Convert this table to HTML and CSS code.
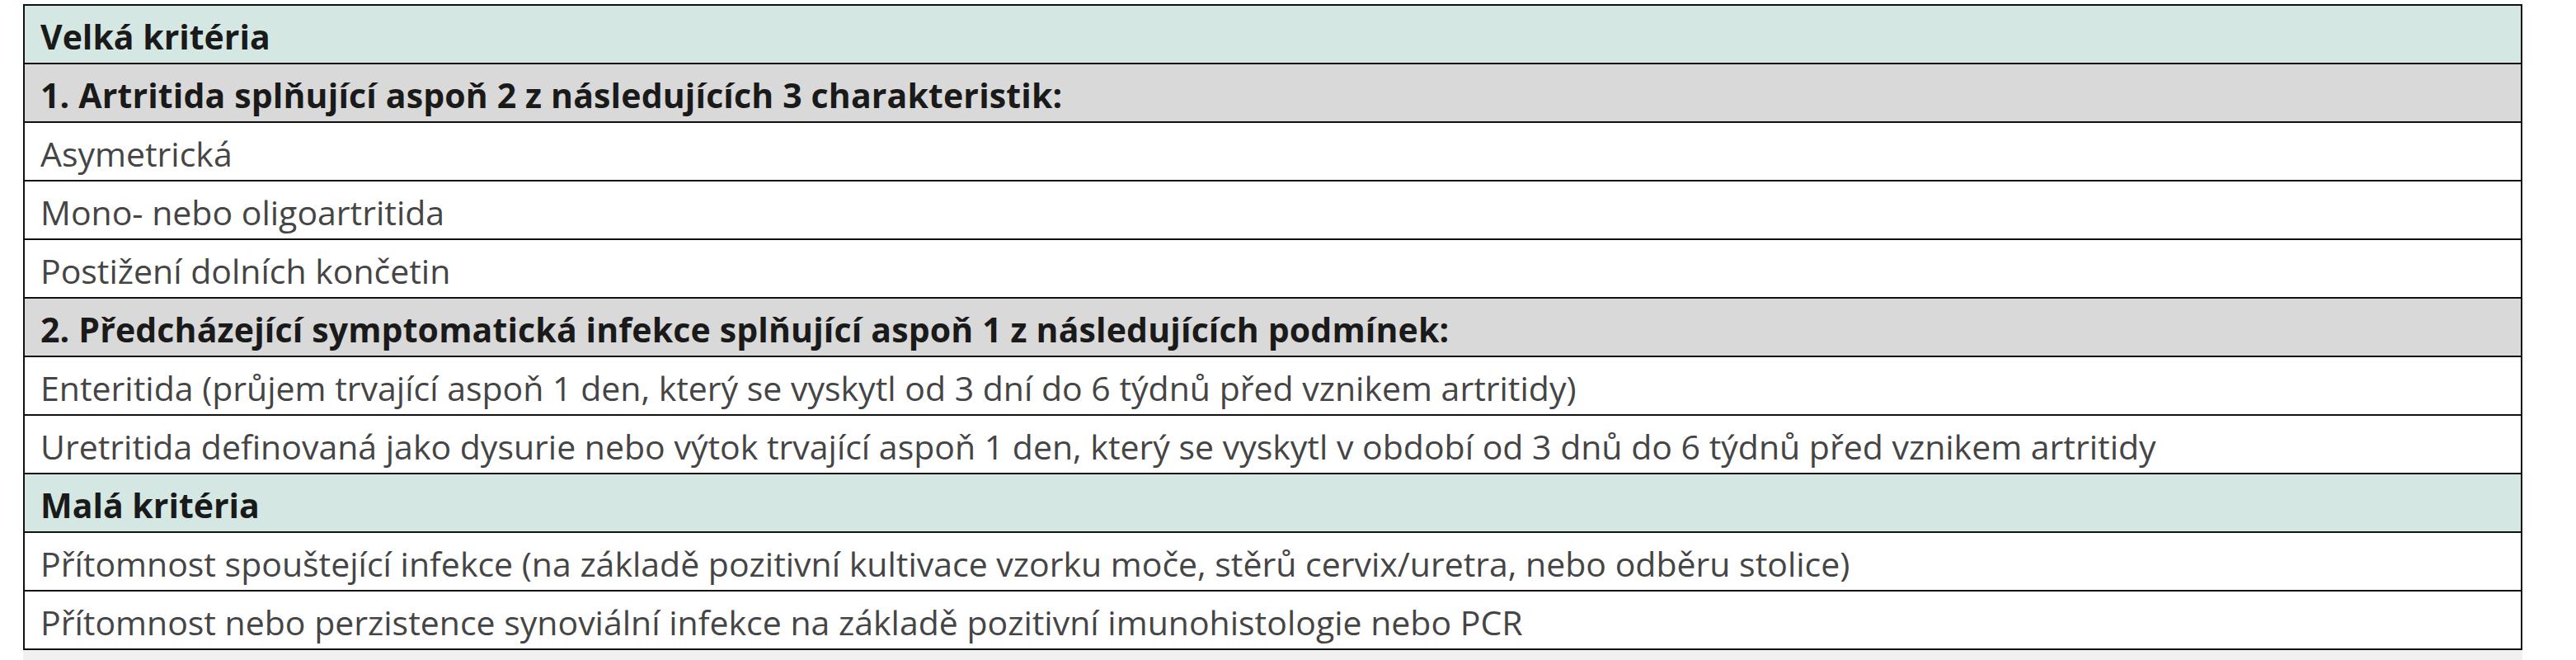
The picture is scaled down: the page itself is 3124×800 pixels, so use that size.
FILE: index.html
```html
<!DOCTYPE html>
<html lang="cs">
<head>
<meta charset="utf-8">
<title>Kritéria reaktivní artritidy</title>
<link rel="stylesheet" href="styles.css">
</head>
<body>
<div class="sheet">
  <table class="criteria">
    <tbody>
      <tr class="section"><td>Velká kritéria</td></tr>
      <tr class="group"><td>1. Artritida splňující aspoň 2 z následujících 3 charakteristik:</td></tr>
      <tr class="item"><td>Asymetrická</td></tr>
      <tr class="item"><td>Mono- nebo oligoartritida</td></tr>
      <tr class="item"><td>Postižení dolních končetin</td></tr>
      <tr class="group"><td>2. Předcházející symptomatická infekce splňující aspoň 1 z následujících podmínek:</td></tr>
      <tr class="item"><td>Enteritida (průjem trvající aspoň 1 den, který se vyskytl od 3 dní do 6 týdnů před vznikem artritidy)</td></tr>
      <tr class="item"><td>Uretritida definovaná jako dysurie nebo výtok trvající aspoň 1 den, který se vyskytl v období od 3 dnů do 6 týdnů před vznikem artritidy</td></tr>
      <tr class="section"><td>Malá kritéria</td></tr>
      <tr class="item"><td>Přítomnost spouštející infekce (na základě pozitivní kultivace vzorku moče, stěrů cervix/uretra, nebo odběru stolice)</td></tr>
      <tr class="item"><td>Přítomnost nebo perzistence synoviální infekce na základě pozitivní imunohistologie nebo PCR</td></tr>
    </tbody>
  </table>
  <div class="foot"></div>
</div>
</body>
</html>
```
FILE: styles.css
```css
html, body {
  margin: 0;
  padding: 0;
  background: #ffffff;
}

body {
  padding: 5px 0 0 28px;
  font-family: "Open Sans", "Liberation Sans", sans-serif;
}

.sheet {
  width: 3031px;
}

.criteria {
  width: 3031px;
  border-collapse: collapse;
  border: 2px solid #111111;
}

.criteria td {
  height: 71px;
  box-sizing: border-box;
  padding: 5px 18px 0 19px;
  border: 2px solid #111111;
  font-size: 41px;
  line-height: 44px;
  vertical-align: middle;
  white-space: nowrap;
}

.item td {
  background: #ffffff;
  color: #454545;
  font-weight: 400;
}

.group td {
  background: #d9d9d9;
  color: #1a1a1a;
  font-weight: 700;
  letter-spacing: 0.15px;
}

.section td {
  background: #d4e7e2;
  color: #1a1a1a;
  font-weight: 700;
}

.foot {
  height: 12px;
  background: #f0f0f0;
}
```
